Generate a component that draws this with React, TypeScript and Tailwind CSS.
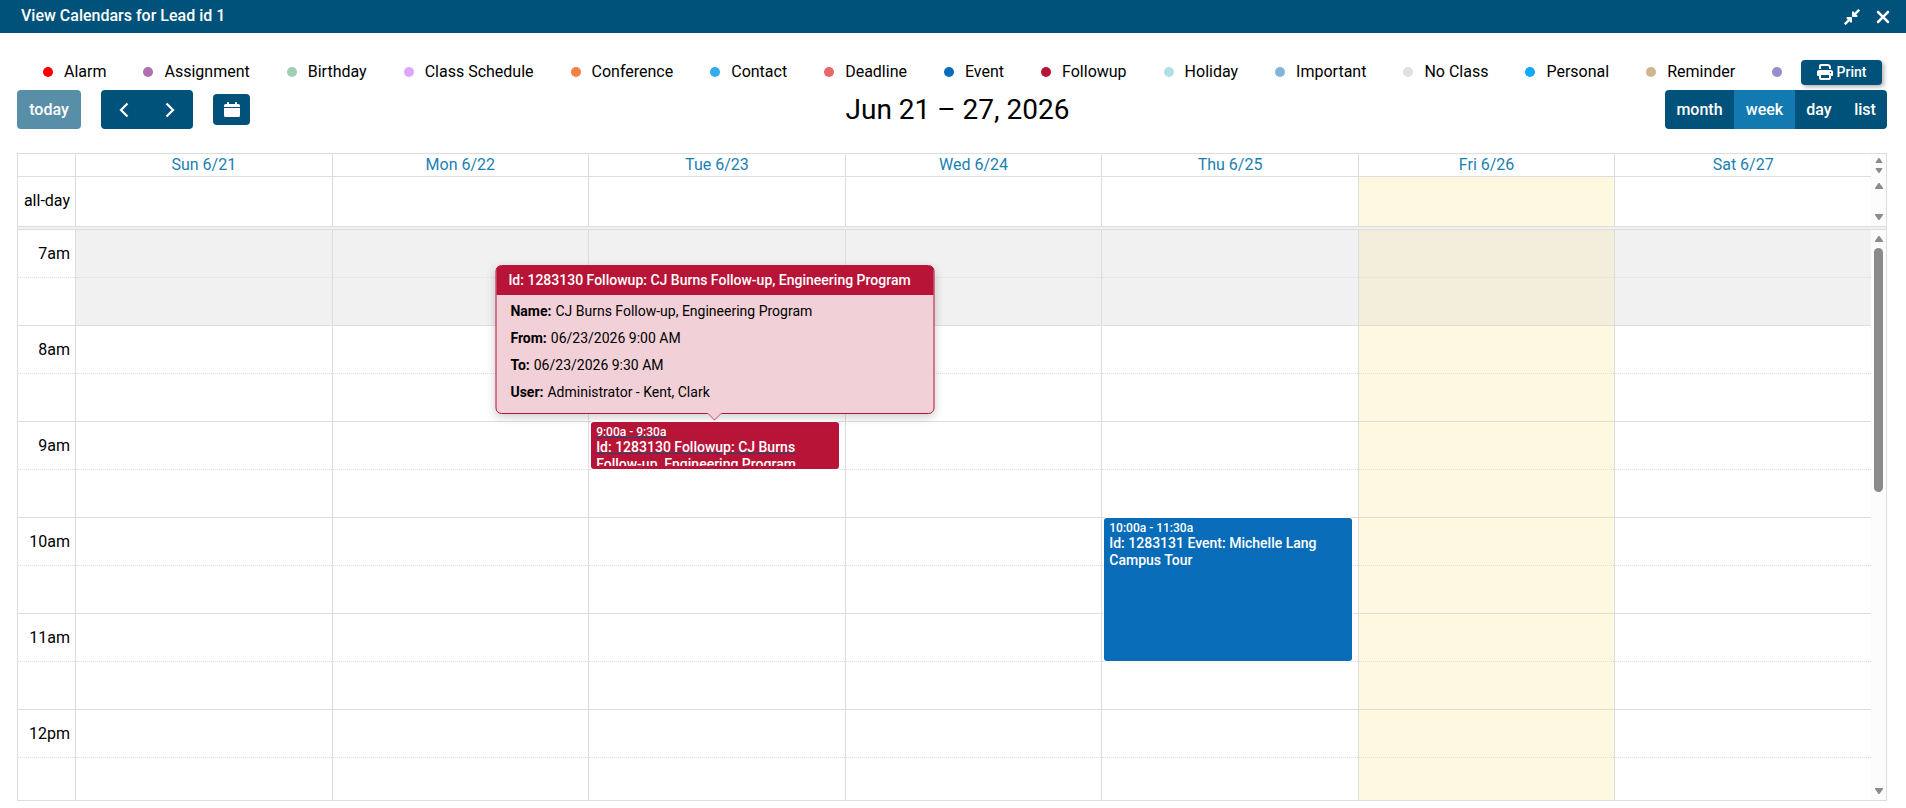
import React from 'react';
import { FaCompressAlt } from 'react-icons/fa';
import { FaPrint, FaXmark } from 'react-icons/fa6';

interface EventType {
  label: string;
  dot: string;
}

interface CalendarEvent {
  day: number;
  slot: number;
  time: string;
  title: string;
  className: string;
  hovered?: boolean;
}

const eventTypes: EventType[] = [
  { label: 'Alarm', dot: 'bg-[#ff0000]' },
  { label: 'Assignment', dot: 'bg-[#b070b0]' },
  { label: 'Birthday', dot: 'bg-[#9fd0b5]' },
  { label: 'Class Schedule', dot: 'bg-[#dca8ff]' },
  { label: 'Conference', dot: 'bg-[#f58145]' },
  { label: 'Contact', dot: 'bg-[#34abee]' },
  { label: 'Deadline', dot: 'bg-[#e66868]' },
  { label: 'Event', dot: 'bg-[#086cb8]' },
  { label: 'Followup', dot: 'bg-[#b81438]' },
  { label: 'Holiday', dot: 'bg-[#b0e0e4]' },
  { label: 'Important', dot: 'bg-[#82b4de]' },
  { label: 'No Class', dot: 'bg-[#e0e0e0]' },
  { label: 'Personal', dot: 'bg-[#14a8ff]' },
  { label: 'Reminder', dot: 'bg-[#d0b48c]' },
  { label: '', dot: 'bg-[#9490cc]' }
];

const days = ['Sun 6/21', 'Mon 6/22', 'Tue 6/23', 'Wed 6/24', 'Thu 6/25', 'Fri 6/26', 'Sat 6/27'];
const today = 5;

// two half-hour slots per hour, only the first one is labelled
const hours = ['7am', '8am', '9am', '10am', '11am', '12pm'];
const slots = hours.flatMap((hour) => [hour, '']);
const businessStart = 2;

const events: CalendarEvent[] = [
  {
    day: 2,
    slot: 4,
    time: '9:00a - 9:30a',
    title: 'Id: 1283130 Followup: CJ Burns Follow-up, Engineering Program',
    className: 'h-[47px] bg-[#b81438]',
    hovered: true
  },
  {
    day: 4,
    slot: 6,
    time: '10:00a - 11:30a',
    title: 'Id: 1283131 Event: Michelle Lang Campus Tour',
    className: 'h-[143px] bg-[#086cb8]'
  }
];

const details = [
  { label: 'Name:', value: 'CJ Burns Follow-up, Engineering Program' },
  { label: 'From:', value: '06/23/2026 9:00 AM' },
  { label: 'To:', value: '06/23/2026 9:30 AM' },
  { label: 'User:', value: 'Administrator - Kent, Clark' }
];

const TitleBar: React.FC = () => (
  <header className="flex h-[33px] shrink-0 items-center justify-between bg-[#00527a] pr-[13px] pl-[21px] text-white">
    <h1 className="pb-[2px] text-base leading-5 font-medium">View Calendars for Lead id 1</h1>
    <div className="flex items-center gap-3">
      <button type="button" aria-label="Restore">
        <FaCompressAlt className="size-[18px]" />
      </button>
      <button type="button" aria-label="Close">
        <FaXmark className="size-5" />
      </button>
    </div>
  </header>
);

const Legend: React.FC = () => (
  <div className="flex h-[26px] items-center pr-[5px] pl-[26px]">
    <ul className="flex h-5 min-w-0 flex-1 flex-wrap gap-x-[37px] overflow-hidden">
      {eventTypes.map((type) => (
        <li key={type.label} className="flex h-5 items-center gap-[11px] text-base leading-5 whitespace-nowrap">
          <span className={`size-[10px] rounded-full ${type.dot}`} />
          {type.label}
        </li>
      ))}
    </ul>
    <button
      type="button"
      className="flex h-[25px] w-[81px] shrink-0 items-center justify-center gap-1 rounded bg-[#00527a] text-sm font-medium text-white shadow-[2px_2px_4px_rgba(0,0,0,0.3)]"
    >
      <FaPrint className="size-4" />
      Print
    </button>
  </div>
);

const Toolbar: React.FC = () => (
  <div className="flex items-center justify-between pt-[5px] text-base font-medium text-white">
    <div className="flex items-center gap-5">
      <button type="button" disabled className="h-[39px] w-16 rounded bg-[#598ea9]">
        today
      </button>
      <div className="flex h-[39px] overflow-hidden rounded bg-[#00527a]">
        <button type="button" aria-label="Previous week" className="flex w-[46px] items-center justify-center">
          <svg viewBox="0 0 10 16" className="h-4 w-[10px]" fill="none" stroke="currentColor" strokeWidth="2.2">
            <path d="M8.500 1.500 2 8l6.500 6.500" />
          </svg>
        </button>
        <button type="button" aria-label="Next week" className="flex w-[46px] items-center justify-center">
          <svg viewBox="0 0 10 16" className="h-4 w-[10px]" fill="none" stroke="currentColor" strokeWidth="2.2">
            <path d="M1.500 1.500 8 8l-6.500 6.500" />
          </svg>
        </button>
      </div>
      <button
        type="button"
        aria-label="Pick a date"
        className="flex h-[31px] w-[37px] items-center justify-center rounded bg-[#00527a]"
      >
        <svg viewBox="0 0 16 15" className="h-[15px] w-4" fill="currentColor">
          <path d="M0 5V3.500Q0 2 1.500 2H3V.7Q3 0 4 0t1 .7V2h6V.7Q11 0 12 0t1 .7V2h1.500Q16 2 16 3.500V5zM0 6h16v7.500q0 1.500-1.500 1.500h-13Q0 15 0 13.500z" />
        </svg>
      </button>
    </div>
    <h2 className="text-[28px] leading-8 font-normal text-black">Jun 21 – 27, 2026</h2>
    <div className="flex h-[39px] overflow-hidden rounded bg-[#00527a]">
      <button type="button" className="w-[69px]">month</button>
      <button type="button" className="w-[61px] bg-[#127ab0]">week</button>
      <button type="button" className="w-12">day</button>
      <button type="button" className="w-11">list</button>
    </div>
  </div>
);

const Columns: React.FC = () => (
  <colgroup>
    <col className="w-[57px]" />
    {days.map((day) => (
      <col key={day} />
    ))}
  </colgroup>
);

interface ScrollStripProps {
  small?: boolean;
  thumb?: boolean;
}

const ScrollStrip: React.FC<ScrollStripProps> = ({ small, thumb }) => (
  <div className={`flex w-[15px] shrink-0 flex-col items-center bg-[#fcfcfc] ${small ? 'py-1' : 'py-[6px]'}`}>
    <svg viewBox="0 0 8 6" className={small ? 'h-[5px] w-2' : 'h-[6px] w-2'} fill="#8b8b8b">
      <path d="M3.500 0h1L8 5v1H0V5z" />
    </svg>
    {thumb && <div className="mt-[6px] h-[244px] w-[9px] rounded-full bg-[#8b8b8b]" />}
    <svg viewBox="0 0 8 6" className={small ? 'mt-auto h-[5px] w-2' : 'mt-auto h-[6px] w-2'} fill="#8b8b8b">
      <path d="M3.500 6h1L8 1V0H0v1z" />
    </svg>
  </div>
);

const EventTooltip: React.FC = () => (
  <div
    role="tooltip"
    className="absolute bottom-[55px] left-1/2 z-20 w-[439px] -translate-x-1/2 rounded-md border border-[#b81438] bg-[#f1d0d7] text-sm text-black shadow-[0_3px_10px_rgba(0,0,0,0.2)]"
  >
    <div className="rounded-t-[4px] bg-[#b81438] px-3 py-1 leading-[21px] font-medium whitespace-nowrap text-white">
      Id: 1283130 Followup: CJ Burns Follow-up, Engineering Program
    </div>
    <dl className="px-[14px] pt-[3px] pb-[7px]">
      {details.map((detail) => (
        <div key={detail.label} className="flex gap-1 leading-[27px]">
          <dt className="font-bold">{detail.label}</dt>
          <dd>{detail.value}</dd>
        </div>
      ))}
    </dl>
    <svg viewBox="0 0 16 9" className="absolute top-full left-1/2 h-[9px] w-4 -translate-x-1/2">
      <path d="M1 0h14v1L8 8 1 1z" fill="#f1d0d7" />
      <path d="M1 0l7 7 7-7" fill="none" stroke="#b81438" strokeOpacity="0.7" />
    </svg>
  </div>
);

const EventBlock: React.FC<{ event: CalendarEvent }> = ({ event }) => (
  <div className="absolute top-0 right-[6px] left-[2px] z-10">
    <a
      href="#"
      className={`block overflow-hidden rounded-[3px] px-[5px] py-[3px] text-white shadow-[0_0_0_1px_#fff] ${event.className}`}
    >
      <div
        className={`h-full overflow-hidden font-medium decoration-[#00527a] ${event.hovered ? 'underline' : ''}`}
      >
        <div className="text-xs leading-[14px]">{event.time}</div>
        <div className="text-sm leading-[17px]">{event.title}</div>
      </div>
    </a>
    {event.hovered && <EventTooltip />}
  </div>
);

const WeekGrid: React.FC = () => (
  <div className="mt-6 flex min-h-0 flex-1 flex-col border border-[#dddddd] text-base">
    <div className="flex shrink-0">
      <table className="w-full min-w-0 flex-1 table-fixed border-separate border-spacing-0">
        <Columns />
        <thead>
          <tr className="h-[23px]">
            <th className="border-b border-[#dddddd] p-0" />
            {days.map((day) => (
              <th key={day} className="border-b border-l border-[#dddddd] p-0 leading-[22px] font-normal">
                <a href="#" className="text-[#1b7fb3]">{day}</a>
              </th>
            ))}
          </tr>
        </thead>
      </table>
      <ScrollStrip small />
    </div>
    <div className="flex shrink-0 border-b border-[#dddddd]">
      <table className="w-full min-w-0 flex-1 table-fixed border-separate border-spacing-0">
        <Columns />
        <tbody>
          <tr className="h-[49px]">
            <th className="p-0 pr-[5px] pb-[2px] text-right font-normal whitespace-nowrap">all-day</th>
            {days.map((day, i) => (
              <td key={day} className={`border-l border-[#dddddd] p-0 ${i === today ? 'bg-[#fff8e0]' : ''}`} />
            ))}
          </tr>
        </tbody>
      </table>
      <ScrollStrip />
    </div>
    <div className="h-[3px] shrink-0 border-b border-[#dddddd] bg-[#f1f1f1]" />
    <div className="flex min-h-0 flex-1 overflow-hidden">
      <table className="w-full min-w-0 flex-1 table-fixed self-start border-separate border-spacing-0">
        <Columns />
        <tbody>
          {slots.map((label, slot) => {
            const line = label ? 'border-b border-dotted' : 'border-b';
            return (
              <tr key={slot} className="h-12">
                <th className={`border-[#dddddd] p-0 pr-[5px] text-right font-normal ${line}`}>{label}</th>
                {days.map((day, i) => {
                  const closed = slot < businessStart;
                  const background = closed
                    ? i === today ? 'bg-[#f2eedb]' : 'bg-[#f1f1f1]'
                    : i === today ? 'bg-[#fff8e0]' : '';
                  const event = events.find((e) => e.day === i && e.slot === slot);
                  return (
                    <td key={day} className="h-12 p-0">
                      <div className="h-12 border-l border-[#dddddd]">
                        <div className={`relative h-12 border-[#dddddd] ${line} ${background}`}>
                          {event && <EventBlock event={event} />}
                        </div>
                      </div>
                    </td>
                  );
                })}
              </tr>
            );
          })}
        </tbody>
      </table>
      <ScrollStrip thumb />
    </div>
  </div>
);

const App: React.FC = () => {
  return (
    <div className="flex h-screen min-h-[480px] flex-col bg-white font-[Roboto,sans-serif] text-black">
      <TitleBar />
      <main className="flex min-h-0 flex-1 flex-col pt-[26px] pr-[19px] pb-[7px] pl-[17px]">
        <Legend />
        <Toolbar />
        <WeekGrid />
      </main>
    </div>
  );
};

export default App;
